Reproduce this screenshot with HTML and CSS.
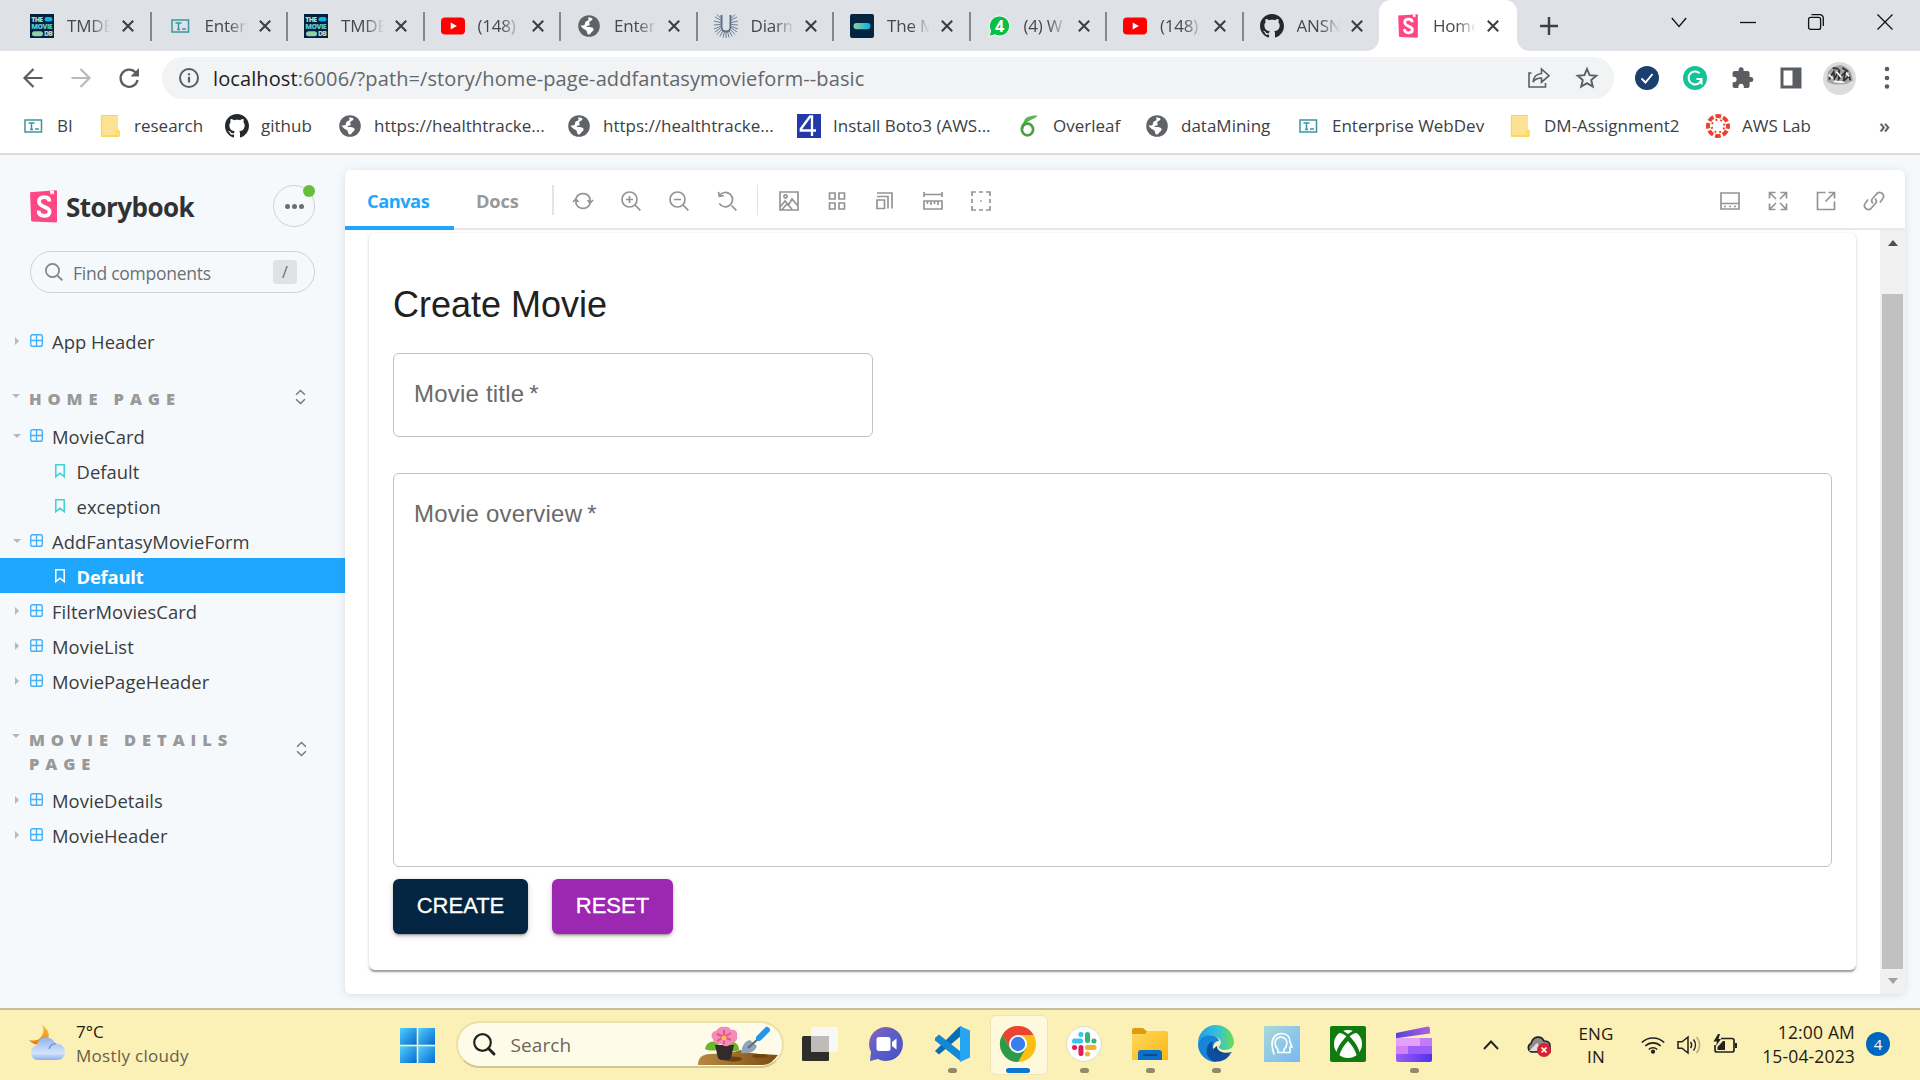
FILE: index.html
```html
<!DOCTYPE html>
<html lang="en">
<head>
<meta charset="utf-8">
<title>Home Page / AddFantasyMovieForm - Default</title>
<link rel="stylesheet" href="styles.css">
</head>
<body>
<svg class="defs" width="0" height="0" aria-hidden="true">
  <defs>
    <linearGradient id="tmdbg"><stop offset="0" stop-color="#90cea1"/><stop offset="1" stop-color="#01b4e4"/></linearGradient>
    <linearGradient id="wing" x2="1" y2="1"><stop offset="0" stop-color="#4fd0ff"/><stop offset="1" stop-color="#0669cf"/></linearGradient>
    <linearGradient id="edgeg"><stop offset="0" stop-color="#1d9fe8"/><stop offset=".55" stop-color="#35c1d8"/><stop offset="1" stop-color="#67e04c"/></linearGradient>
    <linearGradient id="teamsg" x2="1" y2="1"><stop offset="0" stop-color="#8b62b8"/><stop offset=".45" stop-color="#5b5fc7"/><stop offset="1" stop-color="#4b4dc6"/></linearGradient>
    <linearGradient id="foldg" x2="1" y2="1"><stop offset="0" stop-color="#ffd95e"/><stop offset="1" stop-color="#fbb614"/></linearGradient>
    <linearGradient id="cloudg" x2="0" y2="1"><stop offset="0" stop-color="#8fb4ef"/><stop offset=".7" stop-color="#d5e3fa"/><stop offset="1" stop-color="#8eaeee"/></linearGradient>
    <linearGradient id="moong" x2="0" y2="1"><stop offset="0" stop-color="#f8c93c"/><stop offset="1" stop-color="#e87817"/></linearGradient>
    <linearGradient id="clipa"><stop offset="0" stop-color="#5145d6"/><stop offset="1" stop-color="#b060dc"/></linearGradient>
    <linearGradient id="clipb"><stop offset="0" stop-color="#9a5cf6"/><stop offset="1" stop-color="#5232ea"/></linearGradient>
    <linearGradient id="soilg"><stop offset="0" stop-color="#b98943"/><stop offset="1" stop-color="#7c4c12"/></linearGradient>
    <linearGradient id="headg" x2="1" y2="1"><stop offset="0" stop-color="#a8d8d8"/><stop offset="1" stop-color="#78b8f4"/></linearGradient>
    <symbol id="i-tmdb" viewBox="0 0 24 24"><rect width="24" height="24" fill="#04203f"/><g fill="#a9dcc8" font-family="Open Sans, sans-serif" font-weight="800" font-size="7"><text x="1.2" y="8" textLength="12">THE</text><text x="1.2" y="15" textLength="21.5" fill="#5cc8cd">MOVIE</text><text x="14" y="22" textLength="9">DB</text></g><rect x="14.5" y="3" width="8" height="4.6" rx="2.3" fill="#10b5df"/><rect x="2" y="17.200" width="11" height="5" rx="2.500" fill="#8fd0a6"/></symbol>
    <symbol id="i-t" viewBox="0 0 24 24"><rect x="4" y="6" width="16.500" height="12" fill="none" stroke="#3b95a0" stroke-width="1.500"/><path d="M7.500 9h6M10.500 9v6.500M9 15.400h3M14 15h4" fill="none" stroke="#3b95a0" stroke-width="1.500"/></symbol>
    <symbol id="i-yt" viewBox="0 0 24 24"><rect y="3.600" width="24" height="17" rx="4" fill="#f00"/><path d="M9.700 8.400v7.200l6.200-3.600z" fill="#fff"/></symbol>
    <symbol id="i-globe" viewBox="0 0 24 24"><circle cx="12" cy="12" r="10.800" fill="#5f6368"/><path d="M11 3.500c3-.3 4.500.5 4.500 1.700-.2 1.600-3 1.700-3.300 2.900-.2 1.300.8 1.900.4 2.900-.5.900-2 .3-2.800 1-.5.500.2 1.100 1.200 1.100 2.400.1 5.600.1 5.600 2.500 0 1.500-1.400 1.900-2.200 2.700-.8.900-.9 2.200-2.600 2.200-1.400-.1-1.800-1.300-1.900-2.700-.1-1.600-2-1.800-3-2.700-1.300-1.100-3-2.600-3.400-3.900 1.200.3 3 .7 3.900-.1 1-1 .1-2.400 1.500-3.500 1.200-.9 2.400-.9 2.700-1.900.2-.8-.8-1.400-.6-2.200z" fill="#fff"/></symbol>
    <symbol id="i-gh" viewBox="0 0 16 16"><path fill="#24292e" d="M8 0C3.580 0 0 3.580 0 8c0 3.540 2.290 6.530 5.470 7.590.4.070.55-.17.55-.38 0-.19-.01-.82-.01-1.490-2.010.37-2.530-.49-2.690-.94-.09-.23-.48-.94-.82-1.130-.28-.15-.68-.52-.01-.53.63-.01 1.080.58 1.230.82.72 1.210 1.870.87 2.330.66.07-.52.28-.87.51-1.070-1.780-.2-3.640-.89-3.640-3.950 0-.87.31-1.590.82-2.150-.08-.2-.36-1.020.08-2.120 0 0 .67-.21 2.200.82.64-.18 1.320-.27 2-.27s1.360.09 2 .27c1.530-1.040 2.200-.82 2.200-.82.44 1.100.16 1.920.08 2.120.51.56.82 1.270.82 2.150 0 3.070-1.870 3.750-3.650 3.950.29.25.54.73.54 1.480 0 1.070-.01 1.930-.01 2.200 0 .21.15.46.55.38A8.010 8.010 0 0 0 16 8c0-4.420-3.580-8-8-8z"/></symbol>
    <symbol id="i-rays" viewBox="0 0 24 24"><g fill="none" stroke="#5d7186"><path d="M7.500 1v12a4.500 4.500 0 0 0 9 0V1" stroke-width="2"/><path d="M12 17.500V24M10.500 17.500l-1.500 6M13.500 17.500l1.500 6M8.800 17l-3 5.500M15.200 17l3 5.500M7.500 15.500l-4.500 5M16.500 15.500l4.500 5M6.500 14L1 18M17.500 14l5.500 4M6.500 12.500L0 15M17.500 12.500L24 15M6.500 10.500L0 11M17.500 10.500l6.500.5M6.500 8.500L0 7M17.500 8.500L24 7M6.500 6L1 3M17.500 6L23 3M6.500 4L3 .500M17.500 4L21 .500" stroke-width=".9"/></g></symbol>
    <symbol id="i-db" viewBox="0 0 24 24"><rect width="24" height="24" rx="2" fill="#032541"/><rect x="3.500" y="9" width="17" height="6.200" rx="3.100" fill="url(#tmdbg)"/></symbol>
    <symbol id="i-wa" viewBox="0 0 24 24"><path d="M12.500 2a10 10 0 1 1-4.600 18.800L2 22.500l1.600-5.700A10 10 0 0 1 12.500 2z" fill="#0abf46" stroke="#fff" stroke-width="1"/><text x="8" y="18" font-family="Open Sans, sans-serif" font-weight="700" font-size="16" fill="#fff">4</text></symbol>
    <symbol id="i-sb" viewBox="0 0 27 33"><path d="M0 2.200L26 .3a.9.900 0 0 1 1 .9V31.600a1 1 0 0 1-1 1L2.200 31.500a1.200 1.200 0 0 1-1.100-1.200z" fill="#ff4785"/><path d="M20 .8l3.800-.3v4.200l-1.500-1.200-1.700 1.300z" fill="#fff"/><path d="M19.300 11.400c0-2.600-1.500-4.200-5-4.200-3.700 0-5.300 1.800-5.300 4.600 0 5.700 10.600 4.700 10.600 9.600 0 2.700-1.800 4.400-5.400 4.400-3.700 0-5.700-1.700-5.500-5.200" fill="none" stroke="#fff" stroke-width="3.800"/></symbol>
    <symbol id="i-folder" viewBox="0 0 24 24"><path d="M3 1.500h17v14h1V23H4l-1-1z" fill="#fde293"/><path d="M3.500 2v20h15v-4.500a1.500 1.500 0 0 1 2.700 0v3.700c0 1-.8 1.300-2 1.300" fill="none" stroke="#fdd54f" stroke-width="1.300"/><path d="M3 1.500h17" stroke="#fdd54f"/></symbol>
    <symbol id="i-four" viewBox="0 0 24 24"><rect width="24" height="24" fill="#2339a8"/><path d="M15 22V2.500h-2L3.800 15v1.500H19" fill="none" stroke="#fff" stroke-width="2.300"/></symbol>
    <symbol id="i-leaf" viewBox="0 0 24 24"><ellipse cx="10.500" cy="15.500" rx="5.600" ry="5.900" fill="none" stroke="#47a141" stroke-width="2.700"/><path d="M4.900 15C5 10 8 7 14 4.500" fill="none" stroke="#47a141" stroke-width="2.400"/><path d="M7 8.500c0-5 4.500-7 13.500-7-2 3-5.500 4-10 4.800z" fill="#5bb554"/></symbol>
    <symbol id="i-lab" viewBox="0 0 24 24"><circle cx="12" cy="12" r="10" fill="none" stroke="#e8432d" stroke-width="4" stroke-dasharray="5.700 2.154" stroke-dashoffset="2.850"/><circle cx="12" cy="12" r="6.300" fill="none" stroke="#e8432d" stroke-width="2" stroke-dasharray="1.800 3.148" stroke-dashoffset="-1.600"/></symbol>
    <symbol id="i-x" viewBox="0 0 12 12"><path d="M.8.800l10.400 10.400M11.200.8L.8 11.200" stroke="#3c4043" stroke-width="2.100" fill="none"/></symbol>
    <symbol id="i-comp" viewBox="0 0 14 14"><rect x=".8" y=".8" width="12.400" height="12.400" rx="2" fill="none" stroke="currentColor" stroke-width="1.500"/><path d="M7 1v12M1 7h12" stroke="currentColor" stroke-width="1.500"/></symbol>
    <symbol id="i-mark" viewBox="0 0 10 14"><path d="M.8.700h8.400v12L5 9.200.8 12.700z" fill="none" stroke="currentColor" stroke-width="1.500"/></symbol>
    <symbol id="i-expand" viewBox="0 0 12 16"><path d="M1.200 5.500L6 .900l4.800 4.600M1.200 10.500L6 15.100l4.800-4.600" fill="none" stroke="#777" stroke-width="1.600"/></symbol>
  </defs>
</svg>

<header class="tabstrip">
  <div class="tab first"><svg class="fav"><use href="#i-tmdb"/></svg><span class="tab-title">TMDB</span><svg class="tab-x"><use href="#i-x"/></svg></div>
  <div class="tab"><svg class="fav"><use href="#i-t"/></svg><span class="tab-title">Enterp</span><svg class="tab-x"><use href="#i-x"/></svg></div>
  <div class="tab"><svg class="fav"><use href="#i-tmdb"/></svg><span class="tab-title">TMDB</span><svg class="tab-x"><use href="#i-x"/></svg></div>
  <div class="tab"><svg class="fav"><use href="#i-yt"/></svg><span class="tab-title">(148)</span><svg class="tab-x"><use href="#i-x"/></svg></div>
  <div class="tab"><svg class="fav"><use href="#i-globe"/></svg><span class="tab-title">Enterp</span><svg class="tab-x"><use href="#i-x"/></svg></div>
  <div class="tab"><svg class="fav"><use href="#i-rays"/></svg><span class="tab-title">Diarm</span><svg class="tab-x"><use href="#i-x"/></svg></div>
  <div class="tab"><svg class="fav"><use href="#i-db"/></svg><span class="tab-title">The M</span><svg class="tab-x"><use href="#i-x"/></svg></div>
  <div class="tab"><svg class="fav"><use href="#i-wa"/></svg><span class="tab-title">(4) W</span><svg class="tab-x"><use href="#i-x"/></svg></div>
  <div class="tab"><svg class="fav"><use href="#i-yt"/></svg><span class="tab-title">(148)</span><svg class="tab-x"><use href="#i-x"/></svg></div>
  <div class="tab"><svg class="fav"><use href="#i-gh"/></svg><span class="tab-title">ANSN</span><svg class="tab-x"><use href="#i-x"/></svg></div>
  <div class="tab active"><svg class="fav"><use href="#i-sb"/></svg><span class="tab-title">Home</span><svg class="tab-x"><use href="#i-x"/></svg></div>
  <svg class="new-tab" viewBox="0 0 18 18"><path d="M9 0v18M0 9h18" stroke="#3c4043" stroke-width="2.400"/></svg>
  <div class="win">
    <svg viewBox="0 0 16 16"><path d="M.8 4L8 12.500 15.200 4" /></svg>
    <svg viewBox="0 0 16 16"><path d="M0 8.500h16"/></svg>
    <svg viewBox="0 0 16 16"><rect x=".6" y="3.400" width="12" height="12" rx="2"/><path d="M3.500.700h8.500a3.300 3.300 0 0 1 3.300 3.300v8"/></svg>
    <svg viewBox="0 0 16 16"><path d="M.5.500l15 15M15.500.5l-15 15"/></svg>
  </div>
</header>

<div class="toolbar">
  <div class="nav">
    <svg viewBox="0 0 20 20"><path d="M19.500 10H2M10.500 1L1.500 10l9 9" fill="none" stroke="#5a5e63" stroke-width="2.200"/></svg>
    <svg viewBox="0 0 20 20"><path d="M.5 10H18M9.500 1l9 9-9 9" fill="none" stroke="#b8babd" stroke-width="2.200"/></svg>
    <svg viewBox="0 0 20 20"><path d="M16.700 4.600A8.600 8.600 0 1 0 18.600 12" fill="none" stroke="#5a5e63" stroke-width="2.300"/><path d="M20 0v8.500h-8.500z" fill="#5a5e63"/></svg>
  </div>
  <div class="omnibox">
    <svg class="info" viewBox="0 0 20 20"><circle cx="10" cy="10" r="9" fill="none" stroke="#5a5e63" stroke-width="2"/><path d="M10 8.800v5.700M10 5.200v2" stroke="#5a5e63" stroke-width="2.200"/></svg>
    <span class="url"><b>localhost</b>:6006/?path=/story/home-page-addfantasymovieform--basic</span>
    <svg class="obi" viewBox="0 0 22 22"><path d="M3.500 6H1v14h16.500v-4M5 15c.5-5 3.500-8 8.500-8.500V2l7.500 6.700-7.500 6.500V11C10 11 7 12 5 15z" fill="none" stroke="#5a5e63" stroke-width="1.600"/></svg>
    <svg class="obi" viewBox="0 0 22 22"><path d="M11 2l2.600 6.200 6.700.5-5.100 4.400 1.600 6.500L11 16.100l-5.800 3.500 1.600-6.500L1.700 8.700l6.700-.5z" fill="none" stroke="#5a5e63" stroke-width="1.900"/></svg>
  </div>
  <div class="ext">
    <svg viewBox="0 0 24 24"><circle cx="12" cy="12" r="12" fill="#1b3f6e"/><path d="M6.500 12.500l4 4L17.500 8" fill="none" stroke="#fff" stroke-width="1.900"/></svg>
    <svg viewBox="0 0 24 24"><circle cx="12" cy="12" r="12" fill="#15c39a"/><path d="M16.500 7.200A6.500 6.500 0 1 0 18.500 13h-5M18.500 18.500V13" fill="none" stroke="#fff" stroke-width="2"/></svg>
    <svg viewBox="0 0 24 24"><path d="M19.800 11h-1.200V7c0-1.100-.9-2-2-2h-4V3.800a2.500 2.500 0 0 0-5 0V5h-4c-1.100 0-2 .9-2 2v3.800H3c1.500 0 2.700 1.200 2.700 2.700S4.500 16.200 3 16.200H1.600V20c0 1.100.9 2 2 2h3.800v-1.500c0-1.500 1.200-2.700 2.700-2.700s2.700 1.200 2.700 2.700V22h3.800c1.100 0 2-.9 2-2v-4h1.200a2.500 2.500 0 0 0 0-5z" fill="#5a5e63"/></svg>
    <svg viewBox="0 0 24 24"><path d="M1.500 1.500h21v21h-21z" fill="#5a5e63"/><path d="M4.500 4.500h9v15h-9z" fill="#fff"/></svg>
    <svg class="avatar" viewBox="0 0 34 34"><circle cx="17" cy="17" r="17" fill="#dcdcdc"/><path d="M5 10c4-5 8-6 13-7 4 1 9 4 11 8l2 8c-6 3-6 4-11 4-6 0-9 1-16-3z" fill="#a5a5a5"/><path d="M6 18l5-8 1 7 5-9-1 10 7-8-2 10 6-6 1 5M10 6l6 1M20 6l6 4" fill="none" stroke="#333" stroke-width="1.800"/><path d="M6 13l4 4M14 10l5 6M24 11l3 4M11 20l11 1" stroke="#fff" stroke-width="1.800"/></svg>
    <svg viewBox="0 0 24 24"><g fill="#5a5e63"><circle cx="12" cy="3" r="2.300"/><circle cx="12" cy="12" r="2.300"/><circle cx="12" cy="20.500" r="2.300"/></g></svg>
  </div>
</div>

<nav class="bookmarks">
  <a><svg><use href="#i-t"/></svg>BI</a>
  <a><svg><use href="#i-folder"/></svg>research</a>
  <a><svg><use href="#i-gh"/></svg>github</a>
  <a><svg><use href="#i-globe"/></svg>https://healthtracke...</a>
  <a><svg><use href="#i-globe"/></svg>https://healthtracke...</a>
  <a><svg><use href="#i-four"/></svg>Install Boto3 (AWS...</a>
  <a><svg><use href="#i-leaf"/></svg>Overleaf</a>
  <a><svg><use href="#i-globe"/></svg>dataMining</a>
  <a><svg><use href="#i-t"/></svg>Enterprise WebDev</a>
  <a><svg><use href="#i-folder"/></svg>DM-Assignment2</a>
  <a><svg><use href="#i-lab"/></svg>AWS Lab</a>
  <span class="more">»</span>
</nav>

<div class="app">
  <aside class="side">
    <div class="brand">
      <svg class="sb-logo"><use href="#i-sb"/></svg><span class="brand-name">Storybook</span>
      <div class="menu-btn"><i></i><i></i><i></i><span class="dot"></span></div>
    </div>
    <div class="search">
      <svg viewBox="0 0 18 18"><circle cx="7.500" cy="7.500" r="6.600" fill="none" stroke="#808486" stroke-width="1.700"/><path d="M12.300 12.300l5 5" stroke="#808486" stroke-width="1.900"/></svg>
      <span>Find components</span><kbd>/</kbd>
    </div>
    <div class="row root"><i class="caret"></i><svg class="comp"><use href="#i-comp"/></svg>App Header</div>
    <div class="group one"><i class="caret open"></i><span>HOME PAGE</span><svg><use href="#i-expand"/></svg></div>
    <div class="row"><i class="caret open"></i><svg class="comp"><use href="#i-comp"/></svg>MovieCard</div>
    <div class="row story"><svg class="mark"><use href="#i-mark"/></svg>Default</div>
    <div class="row story"><svg class="mark"><use href="#i-mark"/></svg>exception</div>
    <div class="row"><i class="caret open"></i><svg class="comp"><use href="#i-comp"/></svg>AddFantasyMovieForm</div>
    <div class="row story selected"><svg class="mark"><use href="#i-mark"/></svg>Default</div>
    <div class="row"><i class="caret"></i><svg class="comp"><use href="#i-comp"/></svg>FilterMoviesCard</div>
    <div class="row"><i class="caret"></i><svg class="comp"><use href="#i-comp"/></svg>MovieList</div>
    <div class="row"><i class="caret"></i><svg class="comp"><use href="#i-comp"/></svg>MoviePageHeader</div>
    <div class="group two"><i class="caret open"></i><span>MOVIE DETAILS PAGE</span><svg><use href="#i-expand"/></svg></div>
    <div class="row"><i class="caret"></i><svg class="comp"><use href="#i-comp"/></svg>MovieDetails</div>
    <div class="row"><i class="caret"></i><svg class="comp"><use href="#i-comp"/></svg>MovieHeader</div>
  </aside>

  <main class="panel">
    <div class="tools">
      <span class="tool-tab on">Canvas</span><span class="tool-tab docs">Docs</span><i class="sep"></i>
      <svg viewBox="0 0 20 20"><path d="M2.800 8A7.500 7.500 0 0 1 17 7.500V12M17.200 12A7.500 7.500 0 0 1 3 12.500V8M14.500 9l2.700 3L20 9M0 11l2.800-3 2.700 3"/></svg>
      <svg viewBox="0 0 20 20"><circle cx="8.500" cy="8.500" r="7.500"/><path d="M14 14l5.300 5.300M8.500 5v7M5 8.500h7"/></svg>
      <svg viewBox="0 0 20 20"><circle cx="8.500" cy="8.500" r="7.500"/><path d="M14 14l5.300 5.300M5 8.500h7"/></svg>
      <svg viewBox="0 0 20 20"><path d="M2.500 4.500a7.200 7.200 0 1 1-.2 8M1.500.800l.8 4.500 4.500-.6M14.500 14.500l4.800 4.800"/></svg>
      <i class="sep s2"></i>
      <svg viewBox="0 0 20 20"><path d="M1 1h18v18H1zM1 16l5-6 3.500 4L13 8l6 7M3 18.500l5-5.500 5 5"/><circle cx="6.500" cy="5.500" r="1.600"/></svg>
      <svg viewBox="0 0 20 20"><path d="M2.500 2h5.500v6H2.500zM12 2h5.500v6H12zM2.500 12h5.500v6H2.500zM12 12h5.500v6H12z"/></svg>
      <svg viewBox="0 0 20 20"><path d="M2 9h7.500v8.500H2zM2 5.500h11v12M2 2h15v15.500"/></svg>
      <svg viewBox="0 0 20 20"><path d="M1 3.500h18M1 1v5M19 1v5M1 10h18v8H1zM4.500 10v3M8 10v4M11.500 10v3M15 10v4"/></svg>
      <svg viewBox="0 0 20 20"><path d="M1 5V1h4M15 1h4v4M19 15v4h-4M5 19H1v-4M8 1h4M8 19h4M1 8v4M19 8v4M9.200 10h1.600"/></svg>
      <span class="grow"></span>
      <svg viewBox="0 0 20 20"><path d="M1 2h18v16H1zM1 12.500h18M4 15.500h2M9 15.500h2M14 15.500h2"/></svg>
      <svg viewBox="0 0 20 20"><path d="M1.500 7.500v-6h6M2 2l6 6M12.500 1.500h6v6M18 2l-6 6M1.500 12.500v6h6M2 18l6-6M18.500 12.500v6h-6M18 18l-6-6"/></svg>
      <svg viewBox="0 0 20 20"><path d="M9.500 1.500h-8v17h17v-8M12.500 1.500h6v6M18 2l-8.500 8.500"/></svg>
      <svg viewBox="0 0 20 20"><path d="M9 12.500c-2-2-1.500-4 0-5.500l4-4.500a3.900 3.900 0 0 1 5.500 5.500L16 11.500M11 7.500c2 2 1.500 4 0 5.500l-4 4.500A3.900 3.900 0 0 1 1.500 12L4 8.500"/></svg>
    </div>
    <div class="frame">
      <div class="canvas">
        <section class="paper">
          <h1>Create Movie</h1>
          <div class="field title">Movie title&thinsp;*</div>
          <div class="field overview">Movie overview&thinsp;*</div>
          <div class="actions"><button class="create">CREATE</button><button class="reset">RESET</button></div>
        </section>
      </div>
      <div class="scroll"><i class="up"></i><i class="thumb"></i><i class="down"></i></div>
    </div>
  </main>
</div>

<footer class="taskbar">
  <div class="weather">
    <svg viewBox="0 0 36 36"><path d="M13 0c7 4 9 12 4 17-4 4-12 4-17-2 5 1 9 1 12-3s3-8 1-12z" fill="url(#moong)"/><path d="M8 35a7.500 7.500 0 0 1-.5-14.500C9.500 15 13 12.500 17.500 12.500c4 0 7.500 2.500 8.500 6 6-.5 10 3.500 10 8.500 0 4.500-3 8-8 8z" fill="url(#cloudg)"/><path d="M20 24c1-4 4-5.500 7-5.500" fill="none" stroke="#7196e6" stroke-width="1.500"/></svg>
    <div><p>7°C</p><p class="dim">Mostly cloudy</p></div>
  </div>
  <svg class="start" viewBox="0 0 35 35"><g fill="url(#wing)"><path d="M0 0h16.700v16.700H0z"/><path d="M18.300 0H35v16.700H18.300z"/><path d="M0 18.300h16.700V35H0z"/><path d="M18.300 18.300H35V35H18.300z"/></g></svg>
  <div class="find">
    <svg class="lens" viewBox="0 0 22 22"><circle cx="9.500" cy="9.500" r="8.300" fill="none" stroke="#222" stroke-width="2.200"/><path d="M15.500 15.500l5.500 5.500" stroke="#222" stroke-width="2.900" stroke-linecap="round"/></svg>
    <span>Search</span>
    <svg class="plant" viewBox="0 0 80 38"><path d="M0 38c0-6 3-11 12-11 14-1 20 0 30-4 12 4 20 4 38 5-4 5-8 10-16 10z" fill="url(#soilg)"/><ellipse cx="35" cy="32" rx="9" ry="2.500" fill="#6a4212"/><ellipse cx="62" cy="29" rx="8" ry="2" fill="#70450f"/><path d="M7 22c1-6 6-9 13-7l2 7c-5 2-11 2-15 0zM41 23c0-6-4-9-11-8l-2 7c5 3 9 3 13 1z" fill="#6cb52d"/><path d="M17 18h19l-3 13c-2 3-11 3-13 0z" fill="#332b2b"/><path d="M26 0c4-1 6 1 7 3 5-1 7 3 6 6 1 4-2 7-5 7-3 4-8 4-11 1-4 1-8-2-8-5-3-3-1-8 3-8 2-3 5-5 8-4z" fill="#f58bb8"/><path d="M26 3v14M19 7l14 6M33 6l-14 8" stroke="#e0558a" stroke-width="2"/><circle cx="26" cy="11" r="2.500" fill="#ffc44c"/><path d="M43 26c1-8 4-12 9-13l7 6c-2 5-6 8-16 7z" fill="#91a4b7"/><path d="M50 21l10-9" stroke="#586a7b" stroke-width="2"/><path d="M61 11l8-8" stroke="#2397e7" stroke-width="6" stroke-linecap="round"/></svg>
  </div>
  <div class="tasks">
    <div class="task"><svg viewBox="0 0 36 36"><rect y="10" width="27" height="25" rx="1.500" fill="#2e2d29"/><rect x="9" y="1" width="27" height="25" rx="1.500" fill="#f7f7f5"/><path d="M9 10h18v16H9z" fill="#bdbcb8"/></svg></div>
    <div class="task"><svg viewBox="0 0 36 36"><path d="M18 1a17 17 0 1 1-8 32l-8 2 1-9A17 17 0 0 1 18 1z" fill="url(#teamsg)"/><rect x="8.500" y="11" width="14" height="14" rx="2.500" fill="#fff"/><path d="M24 16l4.500-3.500v11L24 20z" fill="#fff"/></svg></div>
    <div class="task run"><svg viewBox="0 0 36 36"><path d="M1 25L25 1l3-.5V9L5 28.500z" fill="#0a6db5"/><path d="M1 12l4-3.500L27 26v9.500L1 14.500z" fill="#1588d3"/><path d="M26 0l10 4.500v27L26 36z" fill="#26a5f2"/></svg></div>
    <div class="task cur"><svg viewBox="0 0 36 36"><circle cx="18" cy="18" r="18" fill="#fbbf12"/><path d="M18 9h15.600A18 18 0 0 0 2.400 9l8 13.500z" fill="#ea4335"/><path d="M2.400 9A18 18 0 0 0 18 36l7.800-13.500L10.200 22.500z" fill="#2b9b4b"/><circle cx="18" cy="18" r="9" fill="#fff"/><circle cx="18" cy="18" r="7.200" fill="#3a7df0"/></svg></div>
    <div class="task run"><svg viewBox="0 0 36 36"><circle cx="18" cy="18" r="17.500" fill="#fdfdfd" stroke="#e4dcb9"/><g stroke-width="5" stroke-linecap="round"><path d="M15 8.500h-.1M8.500 15H14.500" stroke="#36c5f0"/><path d="M21.500 8.500v6M28 15h-.1" stroke="#2eb67d"/><path d="M21.500 21.500H28M21.500 28h.1" stroke="#ecb22e"/><path d="M15 21.500v6M8.500 21.500h.1" stroke="#e01e5a"/></g></svg></div>
    <div class="task run"><svg viewBox="0 0 36 36"><path d="M0 4q0-2 2-2h9l4 3.500V16H0z" fill="#dc9c0c"/><path d="M0 8h13l2.500-3H34q2 0 2 2v27H0z" fill="url(#foldg)"/><path d="M6 34V27q0-3 3-3h18q3 0 3 3v7z" fill="#0d70c8"/><path d="M11 29h14" stroke="#07427f" stroke-width="1.500"/></svg></div>
    <div class="task run"><svg viewBox="0 0 36 36"><path d="M0 18A18 18 0 0 1 36 16c0 5-4 8-9 8-4 0-7-2-6-4 3-2 3-8-5-10C8 8 2 12 0 18z" fill="url(#edgeg)"/><path d="M0 18C2 10 10 8 16 10c4 1.500 5 4 5 5-7 0-9 12 0 18l-3 3A18 18 0 0 1 0 18z" fill="#1684d8"/><path d="M15 15c-3 9 3 16 18 12-4 7-11 10-18 8C6 31 7 18 15 15z" fill="#0d4f9f"/><path d="M15 23c1 6 9 7 18 4l1-1c-8 2-15 0-15-6z" fill="#0e478e"/></svg></div>
    <div class="task"><svg viewBox="0 0 36 36"><path d="M0 0h36v36H0z" fill="url(#headg)"/><path d="M10 28.500c-.5-3-2-6-2-10C8 11.500 12 7.500 17.500 7.500S26 11 26 16l2 5h-2v5.500h-6M14 23.500c-2-2-3-4-3-6.500a6 6 0 0 1 12 0c0 2.500-1 4.500-3 6.500v3h-6z" fill="none" stroke="#fff" stroke-width="1.600"/></svg></div>
    <div class="task"><svg viewBox="0 0 36 36"><rect width="36" height="36" rx="2" fill="#107c10"/><circle cx="18" cy="18" r="14" fill="#fff"/><path d="M7 6l5-2 6 4 6-4 5 2-2 1c-3 0-6 2-7.300 3.500C25 16 29 22 30 28l-3 2C25 24 22 19 18 15c-4 4-7 9-9 15l-3-2c1-6 5-12 10.300-17.500C15 9 12 7 9 7z" fill="#107c10"/></svg></div>
    <div class="task run"><svg viewBox="0 0 36 36"><path d="M0 7L32 0.500q2 0 2 3v4L2 12H0z" fill="url(#clipa)"/><path d="M0 12h34q2 0 2 2v20q0 2-2 2H2q-2 0-2-2z" fill="url(#clipb)"/><path d="M0 12h24v8H0z" fill="#e3a1fb"/><path d="M24 12h12v8H24z" fill="#c17cf4"/><path d="M0 20h12v8H0z" fill="#d481f6"/><path d="M12 20h24v8H12z" fill="#9c5df8"/></svg></div>
  </div>
  <div class="tray">
    <svg class="chev" viewBox="0 0 16 10"><path d="M1 9l7-7.500L15 9" fill="none" stroke="#222" stroke-width="1.900"/></svg>
    <svg class="od" viewBox="0 0 24 24"><path d="M5 19a4.500 4.500 0 0 1-1-8.500C6 3 14 2 17 8c4 0 6 2 6 5v6z" fill="#8c8c8c" stroke="#222" stroke-width="1.700"/><path d="M2 18l8-8 7 8z" fill="#ddd"/><circle cx="17" cy="17" r="7" fill="#d9202e"/><path d="M14.500 14.500l5 5M19.500 14.500l-5 5" stroke="#fff" stroke-width="1.700"/></svg>
    <div class="lang"><p>ENG</p><p>IN</p></div>
    <svg class="net" viewBox="0 0 24 24"><g fill="none" stroke="#222" stroke-width="1.600"><path d="M.8 9.500a16 16 0 0 1 22.400 0M4.300 13a11 11 0 0 1 15.400 0M7.800 16.500a6 6 0 0 1 8.400 0"/></g><circle cx="12" cy="18.700" r="2.100" fill="#222"/></svg>
    <svg class="net" viewBox="0 0 24 24"><g fill="none" stroke="#222" stroke-width="1.500"><path d="M1 8.800h4L11 4v16l-6-4.800H1zM13.500 9a5 5 0 0 1 0 6M16.500 6.500a9 9 0 0 1 0 11"/><path d="M19.500 4a12 12 0 0 1 0 16" stroke="#b5ad84"/></g></svg>
    <svg class="net" viewBox="0 0 24 24"><path d="M8 5.500h11q2 0 2 2v9.500q0 2-2 2H4q-2 0-2-2v-5" fill="none" stroke="#222" stroke-width="1.700"/><path d="M22 10h2v5h-2zM4.500 17v-3L10 8h2v9zM5 1L.5 8.500H4L3 13l5-7H5.500L7 1z" fill="#222"/></svg>
    <div class="clock"><p>12:00 AM</p><p>15-04-2023</p></div>
    <span class="badge">4</span>
  </div>
</footer>
</body>
</html>
```
FILE: styles.css
```css
* { box-sizing: border-box; }
html, body { margin: 0; height: 100%; overflow: hidden; }
body { width: 1920px; height: 1080px; display: flex; flex-direction: column; background: #f6f9fc; font-family: "Open Sans", "Noto Sans", sans-serif; }
p { margin: 0; }
svg { flex: none; overflow: visible; }
.defs { position: absolute; }

/* browser tabs */
.tabstrip { height: 51px; flex: none; display: flex; background: #dee1e6; padding-left: 14px; }
.tab { width: 136.500px; flex: none; height: 51px; display: flex; align-items: center; padding: 0 0 0 17px; position: relative; }
.tab.first { padding-left: 16px; }
.tab.first .tab-x { margin-left: 12px; }
.tab:not(.first):not(.active)::before { content: ""; position: absolute; left: -1px; top: 12px; width: 2px; height: 29px; background: #84888c; }
.tab.active { background: #fff; border-radius: 12px 12px 0 0; width: 138px; }
.tab.active::before, .tab.active::after { content: ""; position: absolute; bottom: 0; width: 12px; height: 12px; }
.tab.active::before { left: -12px; background: radial-gradient(circle at 0 0, transparent 11.5px, #fff 12px); }
.tab.active::after { right: -12px; background: radial-gradient(circle at 100% 0, transparent 11.5px, #fff 12px); }
.fav { width: 24px; height: 24px; }
.tab-title { width: 43px; margin-left: 13px; overflow: hidden; white-space: nowrap; font-size: 17px; letter-spacing: -.2px; line-height: 26px; color: #45494d; -webkit-mask-image: linear-gradient(90deg, #000 55%, transparent); mask-image: linear-gradient(90deg, #000 55%, transparent); }
.tab-x { width: 12px; height: 12px; margin-left: 11px; }
.new-tab { width: 18px; height: 18px; margin: 17px 0 0 23px; }
.win { margin-left: 113px; display: flex; gap: 52.500px; padding-top: 13.500px; }
.win svg { width: 16px; height: 16px; fill: none; stroke: #111; stroke-width: 1.300; }

/* address bar */
.toolbar { height: 54px; flex: none; background: #fff; display: flex; align-items: center; padding-left: 23px; }
.nav { display: flex; gap: 28px; width: 139px; }
.nav svg { width: 20px; height: 20px; }
.omnibox { width: 1452px; height: 42px; border-radius: 21px; background: #f1f3f4; display: flex; align-items: center; padding: 0 16px 0 17px; }
.info { width: 20px; height: 20px; }
.url { flex: 1; margin-left: 14px; padding-top: 1px; font-size: 20px; letter-spacing: .1px; line-height: 30px; color: #63676b; white-space: nowrap; }
.url b { font-weight: 400; color: #1f2124; }
.obi { width: 22px; height: 22px; margin-left: 26px; }
.ext { display: flex; align-items: center; gap: 24px; margin-left: 21px; }
.ext svg { width: 24px; height: 24px; }
.ext .avatar { width: 33px; height: 33px; margin: 0 -5px 0 -4px; }

/* bookmarks */
.bookmarks { height: 50px; flex: none; background: #fff; border-bottom: 2px solid #d9dadc; display: grid; grid-template-columns: 77px 127px 113px 229px 230px 220px 128px 151px 212px 198px 173px auto; padding: 0 0 7px 21px; align-items: center; font-size: 17px; color: #3c4043; }
.bookmarks a { display: flex; align-items: center; gap: 12px; white-space: nowrap; letter-spacing: 0; line-height: 24px; }
.bookmarks svg { width: 24px; height: 24px; }
.more { font-size: 20px; font-weight: 600; line-height: 24px; color: #5a5e63; }

/* storybook */
.app { height: 853px; flex: none; display: flex; }
.side { width: 345px; flex: none; color: #3a3c3e; font-size: 18.400px; }
.brand { display: flex; align-items: center; height: 42px; margin: 30px 30px 0 30px; }
.sb-logo { width: 27px; height: 33px; }
.brand-name { margin-left: 9px; flex: 1; font-weight: 700; font-size: 26px; letter-spacing: -.55px; color: #303233; padding-top: 1px; }
.menu-btn { width: 42px; height: 42px; border: 1.500px solid #cfd2d5; border-radius: 50%; display: flex; align-items: center; justify-content: center; gap: 2px; position: relative; }
.menu-btn i { width: 5px; height: 5px; border-radius: 50%; background: #6b6e70; }
.dot { position: absolute; right: -1px; top: -1px; width: 12px; height: 12px; border-radius: 50%; background: #66bf3c; }
.search { height: 42px; margin: 24px 30px 0; border: 1px solid #cfd2d5; border-radius: 21px; display: flex; align-items: center; padding: 0 17px 0 14px; color: #6d7072; }
.search svg { width: 18px; height: 18px; }
.search span { flex: 1; margin-left: 10px; font-size: 17.500px; letter-spacing: -.25px; padding-top: 1px; }
.search kbd { width: 24px; height: 24px; border-radius: 4px; background: #dfe2e5; font: 16px/24px "Open Sans", sans-serif; text-align: center; }
.row { height: 35px; display: flex; align-items: center; padding: 2px 0 0 15px; white-space: nowrap; letter-spacing: .05px; }
.row.root { margin-top: 30px; }
.comp { width: 13px; height: 13px; margin: -2px 9px 0 0; color: #46b0fa; }
.caret { width: 15px; height: 8px; flex: none; margin-top: -2px; }
.caret::before { content: ""; display: block; width: 0; border: 4px solid transparent; border-left: 4px solid #b5b8ba; border-right: 0; }
.caret.open { margin-left: -2px; width: 17px; }
.caret.open::before { border: 4px solid transparent; border-top: 4px solid #b5b8ba; border-bottom: 0; margin-top: 2px; }
.story { padding-left: 54.500px; }
.mark { width: 10px; height: 14px; margin: -1px 12px 0 0; color: #37d5d3; }
.selected { background: #1ea7fd; color: #fff; font-weight: 700; letter-spacing: -.2px; }
.selected .mark { color: #fff; }
.group { display: flex; color: #999; font-size: 16.500px; font-weight: 800; letter-spacing: 5.900px; line-height: 24px; padding-left: 14px; }
.group span { width: 240px; }
.group .caret { margin-top: 5px; }
.group svg { width: 11px; height: 16px; margin: 2px 0 0 26px; }
.one { height: 60px; padding-top: 29px; }
.two { height: 84px; padding-top: 30px; }
.two .caret { margin-top: 4px; }
.two svg { margin: 13px 0 0 27px; }

.panel { width: 1560px; height: 824px; margin-top: 15px; background: #fff; border-radius: 6px; box-shadow: 0 1px 8px rgba(40,60,80,.14); overflow: hidden; display: flex; flex-direction: column; }
.tools { height: 60px; flex: none; border-bottom: 2px solid #e8e8e8; display: flex; align-items: center; padding-right: 21px; }
.tool-tab { font-weight: 700; font-size: 18.300px; letter-spacing: -.5px; line-height: 56px; height: 60px; color: #999; margin-left: 23px; }
.tool-tab.on { color: #1ea7fd; margin: 0; padding: 3px 0 0 22px; width: 109px; border-bottom: 4px solid #1ea7fd; height: 60px; position: relative; top: 1px; }
.tool-tab.docs { padding-top: 4px; margin-left: 22px; width: 76px; letter-spacing: -.2px; }
.sep { width: 1.500px; height: 30px; background: #e3e3e3; margin-right: -9px; position: relative; top: 1px; }
.sep.s2 { margin: 0 -7px 0 20px; }
.tools svg { width: 20px; height: 20px; margin-left: 28px; fill: none; stroke: #949494; stroke-width: 1.700; position: relative; top: 2px; }
.grow { flex: 1; }
.frame { flex: 1; display: flex; min-height: 0; }
.canvas { flex: 1; padding: 3px 24px 24px; font-family: "Liberation Sans", Arial, sans-serif; }
.paper { height: 737px; border-radius: 6px; padding: 48px 24px 0; box-shadow: 0 3px 1.500px -1.500px rgba(0,0,0,.2), 0 1.500px 1.500px rgba(0,0,0,.14), 0 1.500px 4.500px rgba(0,0,0,.12); }
.paper h1 { margin: 0; font-weight: 400; font-size: 36px; line-height: 48px; color: #212121; }
.field { border: 1px solid #c2c2c2; border-radius: 6px; padding: 22px 20px; font-size: 24px; line-height: 35px; letter-spacing: .2px; color: #6a6a6a; }
.title { width: 480px; height: 84px; margin-top: 24px; }
.overview { height: 394px; margin-top: 36px; }
.actions { display: flex; gap: 24px; margin-top: 12px; }
.actions button { height: 55px; border: 0; border-radius: 6px; color: #fff; font: 22px/52px "Liberation Sans", Arial, sans-serif; letter-spacing: 0; padding: 0 0 1px; -webkit-text-stroke: .3px #fff; box-shadow: 0 3px 1.500px -2px rgba(0,0,0,.2), 0 2px 3px rgba(0,0,0,.18), 0 1.500px 7px rgba(0,0,0,.12); }
.actions .create { width: 135px; background: #032541; }
.actions .reset { width: 121px; background: #9c27b0; }
.scroll { width: 25px; background: #f0f0f0; display: flex; flex-direction: column; align-items: center; padding: 10px 0; }
.up { border: 5.500px solid transparent; border-top: 0; border-bottom: 6px solid #505050; margin-bottom: 48px; }
.thumb { width: 21px; height: 675px; background: #c1c1c1; }
.down { border: 5.500px solid transparent; border-bottom: 0; border-top: 6px solid #a3a3a3; margin-top: 9px; }

/* taskbar */
.taskbar { height: 72px; flex: none; background: #fbf0b6; border-top: 2px solid #c8bf98; display: flex; align-items: center; font-size: 17px; line-height: 24px; color: #1f1c12; }
.weather { width: 371px; margin-left: 29px; display: flex; gap: 11px; align-items: center; }
.weather svg { width: 36px; height: 36px; margin-top: -4px; }
.weather div { margin-top: -2px; }
.dim { color: #66604a; }
.weather .dim { letter-spacing: .3px; }
.start { width: 35px; height: 35px; }
.find { width: 328px; height: 47px; margin: -2px 0 0 20.500px; border: 2px solid #ebe0aa; border-bottom-color: #d3c894; border-radius: 24px; background: #fefbe8; display: flex; align-items: center; padding: 0 4px 0 15px; color: #6a675c; }
.lens { width: 22px; height: 22px; }
.find span { flex: 1; margin-left: 16px; font-size: 19px; letter-spacing: .1px; padding-top: 1px; }
.plant { width: 80px; height: 38px; margin-top: 4px; }
.tasks { display: flex; margin-left: 3.500px; }
.task { width: 66px; height: 70px; display: flex; align-items: center; justify-content: center; position: relative; }
.task svg { width: 36px; height: 36px; position: relative; top: -1px; }
.task.run::after, .task.cur::after { content: ""; position: absolute; bottom: 7px; width: 9px; height: 5px; border-radius: 3px; background: #918a69; }
.task.cur::after { width: 24px; background: #0878d4; }
.task.cur::before { content: ""; position: absolute; left: 5px; top: 5px; width: 56px; height: 58px; border-radius: 6px; background: #fef8dc; border: 1px solid #efe5b4; }
.tray { flex: 1; display: flex; align-items: center; }
.chev { width: 16px; height: 10px; margin-left: 36px; }
.od { width: 24px; height: 24px; margin-left: 28px; }
.lang { width: 60px; margin-left: 15px; text-align: center; line-height: 23px; letter-spacing: .2px; }
.net { width: 24px; height: 24px; margin-right: 12px; }
.lang + .net { margin-left: 15px; }
.clock { flex: 1; text-align: right; font-size: 17.500px; letter-spacing: .15px; margin-top: -2px; white-space: nowrap; }
.badge { width: 24px; height: 24px; border-radius: 50%; background: #0067c0; color: #fff; font-size: 15px; text-align: center; line-height: 24px; margin: -2px 30px 0 11px; }
```
